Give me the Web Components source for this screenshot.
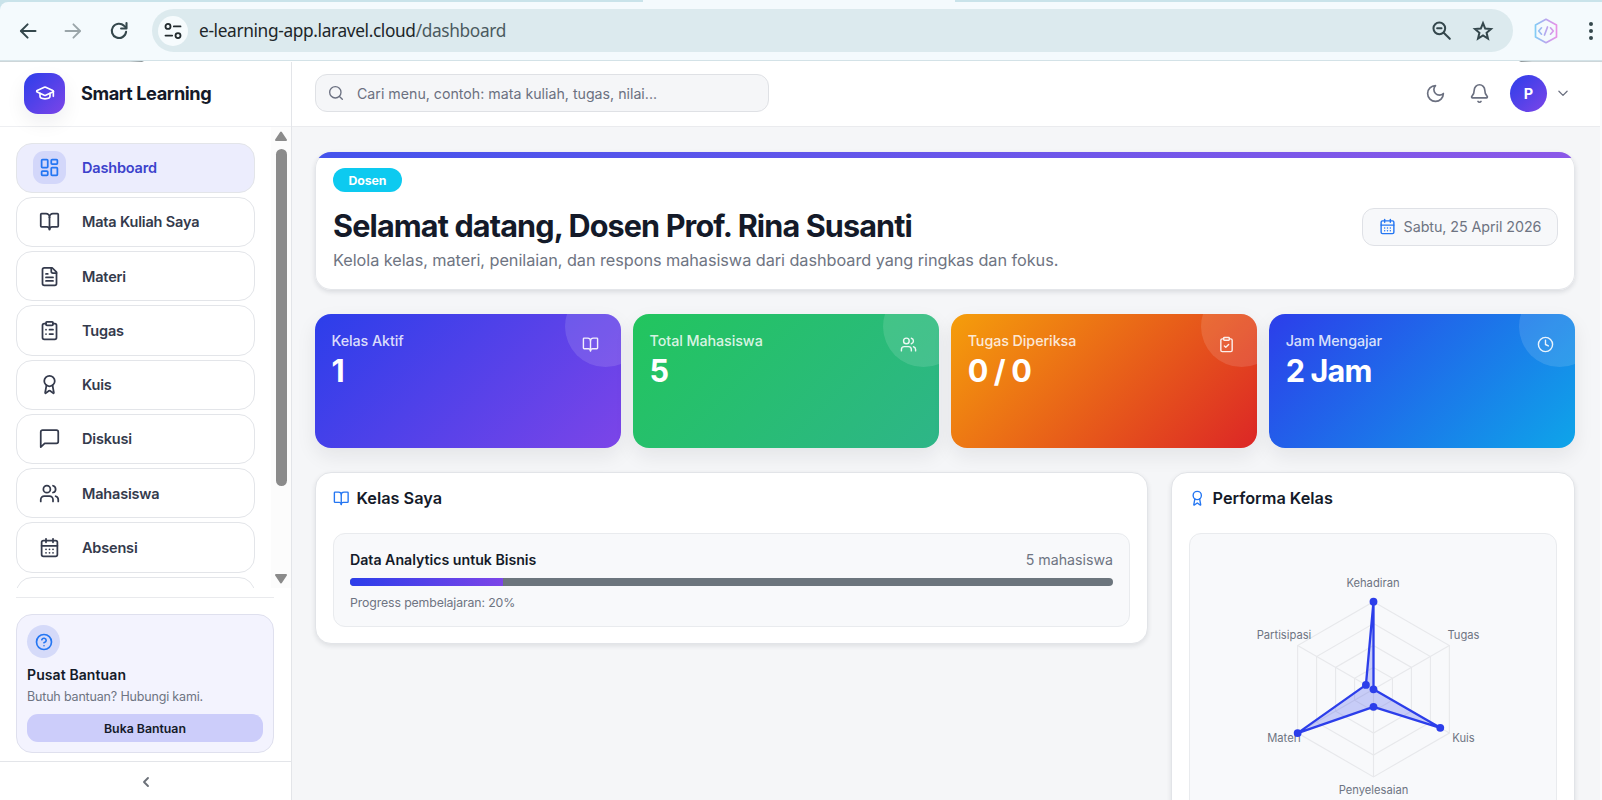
<!DOCTYPE html>
<html lang="id">
<head>
<meta charset="utf-8">
<title>Smart Learning</title>
<style>
    :root {
        --primary: #2c3eea;
        --secondary: #7c45e8;
        --text: #141a29;
        --muted: #6e7482;
        --border: #e3e5e9;
        --blue: #2476f2;
        --page: #f5f6f8;
    }
    html, body { height: 100%; }
    body {
        margin: 0;
        overflow: hidden;
        font-family: Inter, "Liberation Sans", sans-serif;
        color: var(--text);
        background: var(--page);
    }
</style>
</head>
<body>
<learning-app></learning-app>

<script>
const ICONS = {
    dashboard: '<rect x="3" y="3" width="7" height="9" rx="1"/><rect x="14" y="3" width="7" height="5" rx="1"/><rect x="14" y="12" width="7" height="9" rx="1"/><rect x="3" y="16" width="7" height="5" rx="1"/>',
    book: '<path d="M12 7v14"/><path d="M3 18a1 1 0 0 1-1-1V4a1 1 0 0 1 1-1h5a4 4 0 0 1 4 4 4 4 0 0 1 4-4h5a1 1 0 0 1 1 1v13a1 1 0 0 1-1 1h-6a3 3 0 0 0-3 3 3 3 0 0 0-3-3z"/>',
    file: '<path d="M15 2H6a2 2 0 0 0-2 2v16a2 2 0 0 0 2 2h12a2 2 0 0 0 2-2V7Z"/><path d="M14 2v4a2 2 0 0 0 2 2h4"/><path d="M10 9H8"/><path d="M16 13H8"/><path d="M16 17H8"/>',
    clipboard: '<rect x="8" y="2" width="8" height="4" rx="1"/><path d="M16 4h2a2 2 0 0 1 2 2v14a2 2 0 0 1-2 2H6a2 2 0 0 1-2-2V6a2 2 0 0 1 2-2h2"/><path d="M12 11h4"/><path d="M12 16h4"/><path d="M8 11h.01"/><path d="M8 16h.01"/>',
    check: '<rect x="8" y="2" width="8" height="4" rx="1"/><path d="M16 4h2a2 2 0 0 1 2 2v14a2 2 0 0 1-2 2H6a2 2 0 0 1-2-2V6a2 2 0 0 1 2-2h2"/><path d="m9 14 2 2 4-4"/>',
    award: '<circle cx="12" cy="8" r="6"/><path d="m15.477 12.89 1.515 8.526a.5.5 0 0 1-.81.47l-3.58-2.687a1 1 0 0 0-1.197 0l-3.586 2.686a.5.5 0 0 1-.81-.469l1.514-8.526"/>',
    message: '<path d="M22 15.500a2 2 0 0 1-2 2H6.500L2 21.800V4.500a2 2 0 0 1 2-2h16a2 2 0 0 1 2 2z"/>',
    users: '<path d="M16 21v-2a4 4 0 0 0-4-4H6a4 4 0 0 0-4 4v2"/><circle cx="9" cy="7" r="4"/><path d="M22 21v-2a4 4 0 0 0-3-3.87"/><path d="M16 3.13a4 4 0 0 1 0 7.75"/>',
    calendar: '<path d="M8 2v4"/><path d="M16 2v4"/><rect x="3" y="4" width="18" height="18" rx="2"/><path d="M3 10h18"/><path d="M8 14h.01"/><path d="M12 14h.01"/><path d="M16 14h.01"/><path d="M8 18h.01"/><path d="M12 18h.01"/><path d="M16 18h.01"/>',
    help: '<circle cx="12" cy="12" r="10"/><path d="M9.09 9a3 3 0 0 1 5.83 1c0 2-3 3-3 3"/><path d="M12 17h.01"/>',
    clock: '<circle cx="12" cy="12" r="10"/><path d="M12 6v6l4 2"/>',
    search: '<circle cx="11" cy="11" r="8.500"/><path d="m21.500 21.500-4.300-4.300"/>',
    moon: '<path d="M12 3a6 6 0 0 0 9 9 9 9 0 1 1-9-9Z"/>',
    bell: '<path d="M10.27 21a2 2 0 0 0 3.46 0"/><path d="M3.26 15.33A1 1 0 0 0 4 17h16a1 1 0 0 0 .74-1.67C19.41 13.96 18 12.5 18 8A6 6 0 0 0 6 8c0 4.5-1.41 5.96-2.74 7.33"/>',
    down: '<path d="m5 9 7 7 7-7"/>',
    left: '<path d="m15 18-6-6 6-6"/>',
    cap: '<path d="M21.42 10.92a1 1 0 0 0-.02-1.84L12.83 5.18a2 2 0 0 0-1.66 0l-8.57 3.9a1 1 0 0 0 0 1.83l8.57 3.91a2 2 0 0 0 1.66 0z"/><path d="M22 10v6"/><path d="M6 12.5V16a6 3 0 0 0 12 0v-3.5"/>',
    back: '<path d="M21 12H4"/><path d="m11.5 4-8 8 8 8"/>',
    forward: '<path d="M3 12h17"/><path d="m12.5 4 8 8-8 8"/>',
    reload: '<path d="M20.5 13a8.600 8.600 0 1 1-2.400-7.200L20.500 8"/><path d="M21 2.500V9h-6.500"/>',
    tune: '<circle cx="6" cy="6.500" r="3"/><path d="M13 6.500h8"/><circle cx="18" cy="17.500" r="3"/><path d="M3 17.500h8"/>',
    zoomout: '<circle cx="9.500" cy="9.500" r="6.700"/><path d="m14.500 14.500 7 7"/><path d="M7 9.500h5"/>',
    star: '<path stroke-linejoin="miter" d="m12 3.500 2.400 5.900 6.300.5-4.800 4.100 1.500 6.200-5.400-3.400-5.400 3.400 1.500-6.200-4.800-4.100 6.300-.5z"/>'
};

class AppIcon extends HTMLElement {
    constructor() {
        super();
        this.attachShadow({ mode: 'open' });
    }

    connectedCallback() {
        const size = this.getAttribute('size') || 20;
        const weight = this.getAttribute('weight') || 2;
        this.shadowRoot.innerHTML = `
            <style>
                :host { display: inline-flex; flex: none; }
                svg { display: block; fill: none; stroke: currentColor; stroke-linecap: round; stroke-linejoin: round; }
            </style>
            <svg width="${size}" height="${size}" viewBox="0 0 24 24" stroke-width="${weight}">${ICONS[this.getAttribute('name')]}</svg>
        `;
    }
}

class BrowserBar extends HTMLElement {
    constructor() {
        super();
        this.attachShadow({ mode: 'open' });
        this.shadowRoot.innerHTML = `
            <style>
                :host {
                    display: flex;
                    flex-direction: column;
                    height: 62px;
                    background: #c9e3ea;
                    color: #34474c;
                }
                .tab { height: 2px; margin-left: 643px; width: 312px; background: #f4fafd; flex: none; }
                .bar {
                    flex: 1;
                    display: flex;
                    align-items: center;
                    box-sizing: border-box;
                    padding: 0 9px 1px 18px;
                    background: #f4fafd;
                    border-radius: 8px 0 0 0;
                }
                .line {
                    height: 2px;
                    flex: none;
                    background:
                        linear-gradient(90deg, #cdd6d9 0 130px, #8e9699 142px, transparent 144px) 0 1px no-repeat,
                        linear-gradient(90deg, transparent 1519px, #8e9699 1521px, #cdd6d9 1532px) 0 1px no-repeat,
                        linear-gradient(#d3e2e7 0 1px, #fff 1px);
                }
                .forward { margin-left: 25px; color: #9aa5a9; }
                .reload { margin-left: 26px; }
                .address {
                    flex: 1;
                    display: flex;
                    align-items: center;
                    height: 43px;
                    box-sizing: border-box;
                    margin: 0 21px 0 23px;
                    padding: 0 19px 0 6px;
                    border-radius: 22px;
                    background: #dceaee;
                }
                .site {
                    display: flex;
                    align-items: center;
                    justify-content: center;
                    width: 30px;
                    height: 30px;
                    border-radius: 50%;
                    background: #f6fbfd;
                    color: #222b2e;
                }
                .url {
                    flex: 1;
                    margin-left: 11px;
                    font: 17.3px "Noto Sans", sans-serif;
                    letter-spacing: -0.36px;
                    color: #1d2629;
                    white-space: nowrap;
                }
                .url span { color: #4b5a5f; }
                .star { margin-left: 20px; }
                .dots { margin-left: 31.5px; display: grid; gap: 3px; }
                .dots i { width: 4px; height: 4px; border-radius: 50%; background: #34474c; }
            </style>
            <div class="tab"></div>
            <div class="bar">
                <app-icon name="back" size="20" weight="2.4"></app-icon>
                <app-icon class="forward" name="forward" size="20" weight="2.2"></app-icon>
                <app-icon class="reload" name="reload" size="20" weight="2.5"></app-icon>
                <div class="address">
                    <div class="site"><app-icon name="tune" size="20" weight="2.2"></app-icon></div>
                    <div class="url">e-learning-app.laravel.cloud<span>/dashboard</span></div>
                    <app-icon name="zoomout" size="21" weight="2.3"></app-icon>
                    <app-icon class="star" name="star" size="22" weight="2.2"></app-icon>
                </div>
                <svg width="24" height="26" viewBox="0 0 24 26" fill="none" stroke="url(#g)" stroke-width="1.7" stroke-linecap="round" stroke-linejoin="round">
                    <defs><linearGradient id="g" gradientUnits="userSpaceOnUse" x1="0" y1="0" x2="24" y2="0"><stop stop-color="#7cd0f6"/><stop offset=".5" stop-color="#b8a6ee"/><stop offset="1" stop-color="#ee8ee6"/></linearGradient></defs>
                    <path d="M12 1.3 22.5 7v12L12 24.700 1.500 19V7z"/>
                    <path d="M7.500 9.800 4.700 13l2.800 3.200M16.500 9.800l2.800 3.200-2.800 3.200M13.500 9l-3 8"/>
                </svg>
                <div class="dots"><i></i><i></i><i></i></div>
            </div>
            <div class="line"></div>
        `;
    }
}

class NavItem extends HTMLElement {
    constructor() {
        super();
        this.attachShadow({ mode: 'open' });
    }

    connectedCallback() {
        this.shadowRoot.innerHTML = `
            <style>
                :host {
                    display: flex;
                    flex: none;
                    align-items: center;
                    box-sizing: border-box;
                    height: 50.25px;
                    padding-left: 16px;
                    border: 1px solid var(--border);
                    border-radius: 16px;
                    background: #fff;
                    color: #343a4c;
                    font-size: 14.5px;
                    font-weight: 600;
                    letter-spacing: -0.18px;
                }
                :host([active]) { background: #ecedfd; color: #3c42cc; }
                .icon {
                    display: flex;
                    align-items: center;
                    justify-content: center;
                    width: 33px;
                    height: 33px;
                    margin-right: 16px;
                    border-radius: 11px;
                }
                :host([active]) .icon { background: #d3d7fa; color: var(--blue); }
            </style>
            <div class="icon"><app-icon name="${this.getAttribute('icon')}" size="21"></app-icon></div>
            <slot></slot>
        `;
    }
}

class HelpCard extends HTMLElement {
    constructor() {
        super();
        this.attachShadow({ mode: 'open' });
        this.shadowRoot.innerHTML = `
            <style>
                :host {
                    display: block;
                    box-sizing: border-box;
                    height: 139px;
                    padding: 10px;
                    border: 1px solid #dfe0ee;
                    border-radius: 16px;
                    background: #f3f3fe;
                }
                .icon {
                    display: flex;
                    align-items: center;
                    justify-content: center;
                    width: 33px;
                    height: 33px;
                    border-radius: 50%;
                    background: #d5daf9;
                    color: var(--blue);
                }
                h4 { margin: 8px 0 0; font-size: 14px; line-height: 18px; font-weight: 600; letter-spacing: 0.1px; }
                p { margin: 4px 0 0; font-size: 12.5px; line-height: 18px; color: var(--muted); letter-spacing: -0.17px; }
                button {
                    display: block;
                    width: 100%;
                    height: 28px;
                    margin-top: 8px;
                    border: 0;
                    border-radius: 11px;
                    background: #cccdfa;
                    color: var(--text);
                    font: 600 12.3px Inter, sans-serif;
                }
            </style>
            <div class="icon"><app-icon name="help" size="18" weight="2.2"></app-icon></div>
            <h4>Pusat Bantuan</h4>
            <p>Butuh bantuan? Hubungi kami.</p>
            <button>Buka Bantuan</button>
        `;
    }
}

class AppSidebar extends HTMLElement {
    constructor() {
        super();
        this.attachShadow({ mode: 'open' });
        this.shadowRoot.innerHTML = `
            <style>
                :host {
                    display: flex;
                    flex-direction: column;
                    box-sizing: border-box;
                    width: 292px;
                    background: #fff;
                    border-right: 1px solid var(--border);
                }
                .brand {
                    display: flex;
                    flex: none;
                    align-items: center;
                    box-sizing: border-box;
                    height: 65px;
                    padding: 0 24px 2px;
                    border-bottom: 1px solid #eeeff2;
                    font-size: 18.2px;
                    font-weight: 700;
                    letter-spacing: -0.43px;
                }
                .logo {
                    display: flex;
                    align-items: center;
                    justify-content: center;
                    width: 41px;
                    height: 41px;
                    margin-right: 16px;
                    border-radius: 14px;
                    color: #fff;
                    background: linear-gradient(135deg, var(--primary), var(--secondary));
                    box-shadow: 0 8px 20px rgba(20, 26, 41, 0.07);
                }
                .scroll { display: flex; height: 461px; flex: none; overflow: hidden; }
                nav { flex: 1; display: flex; flex-direction: column; gap: 4px; padding: 15.5px 16px 0; }
                .track {
                    display: flex;
                    flex-direction: column;
                    align-items: center;
                    justify-content: space-between;
                    box-sizing: border-box;
                    width: 20px;
                    padding: 4px 0 4px;
                    background: #fcfcfc;
                }
                .track svg { display: block; fill: #8b8b8b; stroke: #8b8b8b; stroke-width: 2; stroke-linejoin: round; }
                .thumb { width: 11px; height: 337px; margin: 8px 0 auto; border-radius: 6px; background: #8b8b8b; }
                .support { padding: 16px 0 8px; margin: 9px 17px 0 16px; border-top: 1px solid #e9eaed; }
                .collapse {
                    flex: 1;
                    display: flex;
                    align-items: center;
                    justify-content: center;
                    padding-top: 2px;
                    border-top: 1px solid var(--border);
                    color: #6b7078;
                }
            </style>
            <div class="brand">
                <div class="logo"><app-icon name="cap" size="20"></app-icon></div>
                Smart Learning
            </div>
            <div class="scroll">
                <nav>
                    <nav-item icon="dashboard" active>Dashboard</nav-item>
                    <nav-item icon="book">Mata Kuliah Saya</nav-item>
                    <nav-item icon="file">Materi</nav-item>
                    <nav-item icon="clipboard">Tugas</nav-item>
                    <nav-item icon="award">Kuis</nav-item>
                    <nav-item icon="message">Diskusi</nav-item>
                    <nav-item icon="users">Mahasiswa</nav-item>
                    <nav-item icon="calendar">Absensi</nav-item>
                    <nav-item icon="file"></nav-item>
                </nav>
                <div class="track">
                    <svg width="12" height="10" viewBox="0 0 12 10"><path d="M6 1.500 11 9H1z"/></svg>
                    <div class="thumb"></div>
                    <svg width="12" height="10" viewBox="0 0 12 10"><path d="M1 1h10L6 8.500z"/></svg>
                </div>
            </div>
            <div class="support"><help-card></help-card></div>
            <div class="collapse"><app-icon name="left" size="16" weight="2.8"></app-icon></div>
        `;
    }
}

class AppTopbar extends HTMLElement {
    constructor() {
        super();
        this.attachShadow({ mode: 'open' });
        this.shadowRoot.innerHTML = `
            <style>
                :host {
                    display: flex;
                    align-items: center;
                    box-sizing: border-box;
                    height: 65px;
                    padding: 0 30px 2px 23px;
                    background: #fff;
                    border-bottom: 1px solid #eaebee;
                    color: #6b7080;
                }
                .search {
                    display: flex;
                    align-items: center;
                    box-sizing: border-box;
                    width: 454px;
                    height: 38px;
                    padding: 0 12px;
                    gap: 13px;
                    border: 1px solid #dfe1e5;
                    border-radius: 12px;
                    background: #f5f6f8;
                    font-size: 14.2px;
                    margin-right: auto;
                }
                .bell { margin: 0 20px 0 23px; }
                .avatar {
                    display: flex;
                    align-items: center;
                    justify-content: center;
                    width: 37px;
                    height: 37px;
                    margin-right: 9px;
                    border-radius: 50%;
                    color: #fff;
                    font-size: 14.5px;
                    font-weight: 700;
                    background: linear-gradient(135deg, var(--primary), var(--secondary));
                }
            </style>
            <div class="search"><app-icon name="search" size="16"></app-icon>Cari menu, contoh: mata kuliah, tugas, nilai...</div>
            <app-icon name="moon" size="21" weight="1.9"></app-icon>
            <app-icon class="bell" name="bell" size="21" weight="1.9"></app-icon>
            <div class="avatar">P</div>
            <app-icon name="down" size="14" weight="2.2"></app-icon>
        `;
    }
}

class HeroCard extends HTMLElement {
    constructor() {
        super();
        this.attachShadow({ mode: 'open' });
        this.shadowRoot.innerHTML = `
            <style>
                :host {
                    display: block;
                    height: 137.5px;
                    overflow: hidden;
                    border-radius: 16px;
                    background: #fff;
                    box-shadow: inset 0 0 0 1px #e4e6ea, 0 2px 5px rgba(20, 26, 41, 0.12);
                }
                .stripe { height: 6px; background: linear-gradient(90deg, #4453ec, #8b58e8); }
                .body { display: flex; align-items: center; padding: 10px 17px 0 18px; }
                .copy { flex: 1; }
                .badge {
                    display: inline-flex;
                    align-items: center;
                    justify-content: center;
                    width: 69px;
                    height: 24px;
                    border-radius: 12px;
                    background: #0dcaf0;
                    color: #fff;
                    font-size: 12.3px;
                    font-weight: 700;
                    letter-spacing: -0.1px;
                }
                h1 { margin: 15px 0 0; font-size: 30.6px; line-height: 38px; font-weight: 700; letter-spacing: -0.88px; white-space: nowrap; }
                p { margin: 3px 0 0; font-size: 16.3px; line-height: 24px; color: var(--muted); letter-spacing: -0.06px; white-space: nowrap; }
                .date {
                    display: flex;
                    align-items: center;
                    justify-content: center;
                    gap: 8px;
                    box-sizing: border-box;
                    width: 196px;
                    height: 38px;
                    margin-top: 13px;
                    border: 1px solid #dfe1e6;
                    border-radius: 12px;
                    background: #f7f8fa;
                    color: var(--muted);
                    font-size: 14.3px;
                    letter-spacing: -0.07px;
                    white-space: nowrap;
                }
                .date app-icon { color: var(--blue); }
            </style>
            <div class="stripe"></div>
            <div class="body">
                <div class="copy">
                    <span class="badge">Dosen</span>
                    <h1>Selamat datang, Dosen Prof. Rina Susanti</h1>
                    <p>Kelola kelas, materi, penilaian, dan respons mahasiswa dari dashboard yang ringkas dan fokus.</p>
                </div>
                <div class="date"><app-icon name="calendar" size="17"></app-icon><span>Sabtu, 25 April 2026</span></div>
            </div>
        `;
    }
}

class StatCard extends HTMLElement {
    constructor() {
        super();
        this.attachShadow({ mode: 'open' });
    }

    connectedCallback() {
        this.shadowRoot.innerHTML = `
            <style>
                :host {
                    position: relative;
                    display: block;
                    box-sizing: border-box;
                    height: 133.5px;
                    padding: 16px 16.5px;
                    border-radius: 16px;
                    color: #fff;
                    background: linear-gradient(135deg, var(--from), var(--to));
                    box-shadow: 0 8px 20px rgba(20, 26, 41, 0.08);
                }
                .clip { position: absolute; inset: 0; overflow: hidden; border-radius: 16px; }
                .clip::before {
                    content: "";
                    position: absolute;
                    top: -28px;
                    right: -25px;
                    width: 81px;
                    height: 81px;
                    border-radius: 50%;
                    background: rgba(255, 255, 255, 0.12);
                }
                .clip app-icon { position: absolute; top: 22px; right: 21.5px; opacity: 0.9; }
                .label { font-size: 14.3px; line-height: 21px; font-weight: 500; letter-spacing: -0.07px; color: rgba(255, 255, 255, 0.84); }
                .value { margin-top: 0; font-size: 30.6px; line-height: 40px; font-weight: 700; letter-spacing: -0.85px; }
            </style>
            <div class="clip"><app-icon name="${this.getAttribute('icon')}" size="17"></app-icon></div>
            <div class="label">${this.getAttribute('label')}</div>
            <div class="value"><slot></slot></div>
        `;
    }
}

class PanelCard extends HTMLElement {
    constructor() {
        super();
        this.attachShadow({ mode: 'open' });
    }

    connectedCallback() {
        this.shadowRoot.innerHTML = `
            <style>
                :host {
                    display: block;
                    box-sizing: border-box;
                    min-width: 0;
                    padding: 13px 17px 16px;
                    border: 1px solid #e2e4e8;
                    border-radius: 16px;
                    background: #fff;
                    box-shadow: 0 2px 5px rgba(20, 26, 41, 0.1);
                }
                h2 { display: flex; align-items: center; gap: 7px; margin: 0 0 23px; font-size: 16.3px; line-height: 24px; font-weight: 600; }
                h2 app-icon { color: var(--blue); margin-top: 1px; }
                .inner { box-sizing: border-box; border: 1px solid #e9ebee; border-radius: 12px; background: #f8f9fb; }
            </style>
            <h2><app-icon name="${this.getAttribute('icon')}" size="16.5"></app-icon>${this.getAttribute('heading')}</h2>
            <div class="inner"><slot></slot></div>
        `;
    }
}

class ClassProgress extends HTMLElement {
    constructor() {
        super();
        this.attachShadow({ mode: 'open' });
    }

    connectedCallback() {
        const value = this.getAttribute('value');
        this.shadowRoot.innerHTML = `
            <style>
                :host { display: block; box-sizing: border-box; height: 92px; padding: 15px 16px; }
                .row { display: flex; justify-content: space-between; font-size: 14.2px; line-height: 22px; color: var(--muted); }
                strong { font-weight: 600; color: var(--text); letter-spacing: -0.02px; }
                .bar { height: 8px; margin-top: 7px; border-radius: 4px; background: #6c757d; overflow: hidden; }
                .fill { height: 100%; background: linear-gradient(90deg, var(--primary), var(--secondary)); }
                small { display: block; margin-top: 8px; font-size: 12.3px; line-height: 18px; letter-spacing: -0.12px; color: var(--muted); }
            </style>
            <div class="row"><strong><slot></slot></strong><span>${this.getAttribute('students')} mahasiswa</span></div>
            <div class="bar"><div class="fill" style="width: ${value}%"></div></div>
            <small>Progress pembelajaran: ${value}%</small>
        `;
    }
}

class RadarChart extends HTMLElement {
    constructor() {
        super();
        this.attachShadow({ mode: 'open' });
        this.data = [
            { label: 'Kehadiran', value: 1, x: 183, y: 52.5 },
            { label: 'Tugas', value: 0, x: 273.5, y: 104.5 },
            { label: 'Kuis', value: 0.88, x: 273.5, y: 207.5 },
            { label: 'Penyelesaian', value: 0.2, x: 183.5, y: 259.5 },
            { label: 'Materi', value: 1, x: 94, y: 207.5 },
            { label: 'Partisipasi', value: 0.1, x: 94, y: 104.5 }
        ];
        this.render();
    }

    point(i, scale) {
        const angle = Math.PI * (i / 3 - 0.5);
        return [183.5 + 87.6 * scale * Math.cos(angle), 155.3 + 87.6 * scale * Math.sin(angle)];
    }

    render() {
        const rings = [0.25, 0.5, 0.75, 1].map(s => `<polygon points="${this.data.map((d, i) => this.point(i, s)).join(' ')}"/>`).join('');
        const axes = this.data.map((d, i) => `<path d="M${this.point(i, 0)}L${this.point(i, 1)}"/>`).join('');
        const points = this.data.map((d, i) => this.point(i, d.value));
        this.shadowRoot.innerHTML = `
            <style>
                :host { display: block; height: 300px; }
                svg { display: block; }
                .grid { fill: none; stroke: #e7e8eb; stroke-width: 1.1; }
                .area { fill: rgba(44, 62, 234, 0.24); stroke: var(--primary); stroke-width: 2.3; stroke-linejoin: round; }
                circle { fill: var(--primary); }
                text { font-size: 11.2px; fill: var(--muted); text-anchor: middle; }
            </style>
            <svg width="360" height="300">
                <g class="grid">${rings}${axes}</g>
                ${this.data.map(d => `<text x="${d.x}" y="${d.y}">${d.label}</text>`).join('')}
                <polygon class="area" points="${points.join(' ')}"/>
                ${points.map(p => `<circle cx="${p[0]}" cy="${p[1]}" r="3.9"/>`).join('')}
            </svg>
        `;
    }
}

class LearningApp extends HTMLElement {
    constructor() {
        super();
        this.attachShadow({ mode: 'open' });
        this.shadowRoot.innerHTML = `
            <style>
                :host { display: flex; flex-direction: column; height: 800px; overflow: hidden; }
                .shell { display: grid; grid-template-columns: 292px 1fr; grid-template-rows: 738px; padding-right: 2px; background: #fafafb; }
                .content { overflow: hidden; background: var(--page); }
                main { padding: 25px 25px 0 23px; }
                .stats { display: grid; grid-template-columns: repeat(4, 1fr); gap: 12.3px; margin: 24.5px 0 24px; }
                .panels { display: grid; grid-template-columns: 833px 1fr; gap: 23px; align-items: start; }
            </style>
            <browser-bar></browser-bar>
            <div class="shell">
                <app-sidebar></app-sidebar>
                <div class="content">
                    <app-topbar></app-topbar>
                    <main>
                        <hero-card></hero-card>
                        <div class="stats">
                            <stat-card icon="book" label="Kelas Aktif" style="--from: #2c3eea; --to: #7c45e8">1</stat-card>
                            <stat-card icon="users" label="Total Mahasiswa" style="--from: #22c55e; --to: #2eb588">5</stat-card>
                            <stat-card icon="check" label="Tugas Diperiksa" style="--from: #f59e0b; --to: #dc2626">0 / 0</stat-card>
                            <stat-card icon="clock" label="Jam Mengajar" style="--from: #2c3eea; --to: #0ea5e9">2 Jam</stat-card>
                        </div>
                        <div class="panels">
                            <panel-card icon="book" heading="Kelas Saya">
                                <class-progress value="20" students="5">Data Analytics untuk Bisnis</class-progress>
                            </panel-card>
                            <panel-card icon="award" heading="Performa Kelas">
                                <radar-chart></radar-chart>
                            </panel-card>
                        </div>
                    </main>
                </div>
            </div>
        `;
    }
}

customElements.define('app-icon', AppIcon);
customElements.define('browser-bar', BrowserBar);
customElements.define('nav-item', NavItem);
customElements.define('help-card', HelpCard);
customElements.define('app-sidebar', AppSidebar);
customElements.define('app-topbar', AppTopbar);
customElements.define('hero-card', HeroCard);
customElements.define('stat-card', StatCard);
customElements.define('panel-card', PanelCard);
customElements.define('class-progress', ClassProgress);
customElements.define('radar-chart', RadarChart);
customElements.define('learning-app', LearningApp);
</script>
</body>
</html>
